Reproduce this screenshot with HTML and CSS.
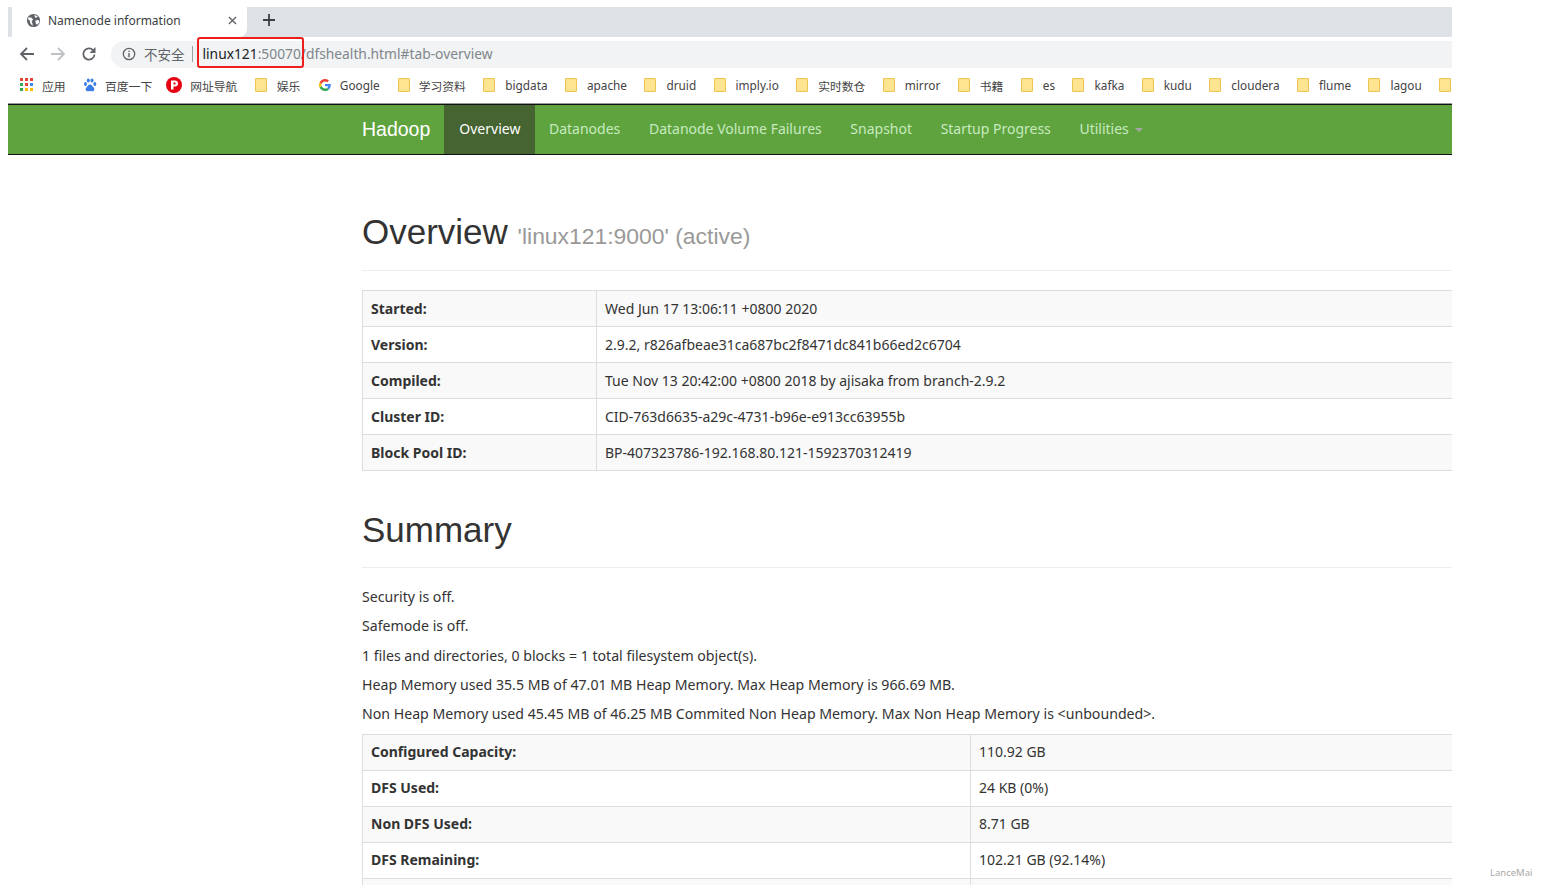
FILE: index.html
```html
<!DOCTYPE html>
<html lang="zh">
<head>
<meta charset="utf-8">
<title>Namenode information</title>
<link rel="stylesheet" href="styles.css">
</head>
<body>
<div class="window">
  <div class="tabstrip">
    <div class="tab">
      <svg class="favicon" viewBox="0 0 16 16"><circle cx="8" cy="8" r="7" fill="#5f6368"/><path d="M3 4.500l3 .5 1.500 2L6 9l1 2.500v2.300L4.500 11 4 8 1.800 6.500zM9 2l3.500 1.500L11 5 9.500 4.500zM10 8l3.500-.5.800 2-2.300 3-1.500-1z" fill="#fff"/></svg>
      <span class="tab-title">Namenode information</span>
      <svg class="tab-close" viewBox="0 0 10 10"><path d="M1 1l8 8M9 1l-8 8" stroke="#5f6368" stroke-width="1.500"/></svg>
    </div>
    <svg class="newtab" viewBox="0 0 12 12"><path d="M6 0v12M0 6h12" stroke="#3c4043" stroke-width="1.800"/></svg>
  </div>
  <div class="toolbar">
    <svg class="nav-icon" viewBox="0 0 16 16"><path d="M15 8H2M8 2L2 8l6 6" fill="none" stroke="#5f6368" stroke-width="1.800"/></svg>
    <svg class="nav-icon" viewBox="0 0 16 16"><path d="M1 8h13M8 2l6 6-6 6" fill="none" stroke="#bdc1c6" stroke-width="1.800"/></svg>
    <svg class="nav-icon" viewBox="0 0 16 16"><path d="M13.500 8.500A5.600 5.600 0 1 1 12 4.200" fill="none" stroke="#5f6368" stroke-width="1.800"/><path d="M14.500 1v6h-6z" fill="#5f6368"/></svg>
    <div class="omnibox">
      <svg class="info" viewBox="0 0 14 14"><circle cx="7" cy="7" r="5.700" fill="none" stroke="#5f6368" stroke-width="1.300"/><path d="M7 6v4.200M7 3.700v1.300" stroke="#5f6368" stroke-width="1.400"/></svg>
      <span class="insecure">不安全</span>
      <span class="sep"></span>
      <span class="url"><span class="host">linux121</span>:50070/dfshealth.html#tab-overview</span>
      <div class="highlight"></div>
    </div>
  </div>
  <div class="bookmarks">
    <a class="bm bm-tight"><svg class="bm-icon" viewBox="0 0 14 14"><g fill="#ea4335"><rect x="0" y="0" width="3" height="3"/><rect x="5" y="0" width="3" height="3"/><rect x="10" y="0" width="3" height="3"/></g><g fill="#34a853"><rect x="0" y="5" width="3" height="3"/><rect x="5" y="5" width="3" height="3" fill="#ea4335"/><rect x="10" y="5" width="3" height="3" fill="#4285f4"/></g><g fill="#fbbc05"><rect x="0" y="10" width="3" height="3" fill="#34a853"/><rect x="5" y="10" width="3" height="3"/><rect x="10" y="10" width="3" height="3"/></g></svg>应用</a>
    <a class="bm bm-tight bm-baidu"><svg class="bm-icon" viewBox="0 0 14 14" fill="#3b7de8"><ellipse cx="2.500" cy="6" rx="1.500" ry="2"/><ellipse cx="5.300" cy="2.500" rx="1.500" ry="2"/><ellipse cx="9" cy="2.500" rx="1.500" ry="2"/><ellipse cx="11.800" cy="6" rx="1.500" ry="2"/><path d="M7 6.500c2 0 2.500 2 4 3.500 1 1.500 0 3.500-2 3.300-1 0-1.300-.4-2-.4s-1 .4-2 .4c-2 .2-3-1.800-2-3.300C4.500 8.500 5 6.500 7 6.500z"/></svg>百度一下</a>
    <a class="bm bm-tight"><svg class="bm-icon bm-icon-lg" viewBox="0 0 16 16"><circle cx="8" cy="8" r="8" fill="#e60012"/><path d="M5 12.500V3.500h4a3 3 0 0 1 0 6H7.500v3z" fill="#fff"/><rect x="7.500" y="5.500" width="2" height="2" fill="#e60012"/></svg>网址导航</a>
    <a class="bm"><span class="folder"></span>娱乐</a>
    <a class="bm bm-tight bm-google"><svg class="bm-icon" viewBox="0 0 14 14"><path d="M12.800 7.100c0-.4 0-.8-.1-1.200H7v2.300h3.300c-.1.800-.6 1.400-1.200 1.800l1.900 1.500c1.100-1 1.800-2.500 1.800-4.400z" fill="#4285f4"/><path d="M7 13c1.600 0 3-.5 4-1.500L9.100 10c-.5.400-1.200.6-2.100.6-1.600 0-2.900-1-3.400-2.500l-2 1.500C2.600 11.700 4.600 13 7 13z" fill="#34a853"/><path d="M3.600 8.100C3.400 7.300 3.400 6.600 3.600 5.900l-2-1.500c-.8 1.600-.8 3.600 0 5.200z" fill="#fbbc05"/><path d="M7 3.400c.9 0 1.700.3 2.300.9L11 2.600C10 1.600 8.600 1 7 1 4.600 1 2.600 2.300 1.600 4.400l2 1.500C4.100 4.400 5.400 3.400 7 3.400z" fill="#ea4335"/></svg>Google</a>
    <a class="bm bm-tight"><span class="folder"></span>学习资料</a>
    <a class="bm"><span class="folder"></span>bigdata</a>
    <a class="bm"><span class="folder"></span>apache</a>
    <a class="bm"><span class="folder"></span>druid</a>
    <a class="bm"><span class="folder"></span>imply.io</a>
    <a class="bm"><span class="folder"></span>实时数仓</a>
    <a class="bm"><span class="folder"></span>mirror</a>
    <a class="bm"><span class="folder"></span>书籍</a>
    <a class="bm"><span class="folder"></span>es</a>
    <a class="bm"><span class="folder"></span>kafka</a>
    <a class="bm"><span class="folder"></span>kudu</a>
    <a class="bm"><span class="folder"></span>cloudera</a>
    <a class="bm"><span class="folder"></span>flume</a>
    <a class="bm"><span class="folder"></span>lagou</a>
    <a class="bm"><span class="folder"></span></a>
  </div>
  <nav class="navbar">
    <span class="brand">Hadoop</span>
    <a class="nav-link active">Overview</a>
    <a class="nav-link">Datanodes</a>
    <a class="nav-link">Datanode Volume Failures</a>
    <a class="nav-link">Snapshot</a>
    <a class="nav-link">Startup Progress</a>
    <a class="nav-link">Utilities<span class="caret"></span></a>
  </nav>
  <main class="container">
    <div class="page-header header-first">
      <h1>Overview <small>'linux121:9000' (active)</small></h1>
    </div>
    <table class="info-table">
      <tr><th>Started:</th><td>Wed Jun 17 13:06:11 +0800 2020</td></tr>
      <tr><th>Version:</th><td>2.9.2, r826afbeae31ca687bc2f8471dc841b66ed2c6704</td></tr>
      <tr><th>Compiled:</th><td>Tue Nov 13 20:42:00 +0800 2018 by ajisaka from branch-2.9.2</td></tr>
      <tr><th>Cluster ID:</th><td>CID-763d6635-a29c-4731-b96e-e913cc63955b</td></tr>
      <tr><th>Block Pool ID:</th><td>BP-407323786-192.168.80.121-1592370312419</td></tr>
    </table>
    <div class="page-header header-second">
      <h1>Summary</h1>
    </div>
    <p class="line">Security is off.</p>
    <p class="line">Safemode is off.</p>
    <p class="line">1 files and directories, 0 blocks = 1 total filesystem object(s).</p>
    <p class="line">Heap Memory used 35.5 MB of 47.01 MB Heap Memory. Max Heap Memory is 966.69 MB.</p>
    <p class="line">Non Heap Memory used 45.45 MB of 46.25 MB Commited Non Heap Memory. Max Non Heap Memory is &lt;unbounded&gt;.</p>
    <table class="info-table summary-table">
      <tr><th>Configured Capacity:</th><td>110.92 GB</td></tr>
      <tr><th>DFS Used:</th><td>24 KB (0%)</td></tr>
      <tr><th>Non DFS Used:</th><td>8.71 GB</td></tr>
      <tr><th>DFS Remaining:</th><td>102.21 GB (92.14%)</td></tr>
      <tr><th>&nbsp;</th><td>&nbsp;</td></tr>
    </table>
  </main>
</div>
<div class="watermark">LanceMai</div>
</body>
</html>
```
FILE: styles.css
```css
* { box-sizing: border-box; }
html, body { height: 100%; }
body {
  margin: 0;
  background: #fff;
  overflow: hidden;
  font-family: "Noto Sans", "Noto Sans CJK SC", sans-serif;
  color: #333;
}
.window {
  width: 1444px;
  height: 885px;
  margin-left: 8px;
  overflow: hidden;
  padding-top: 7px;
}
.tabstrip {
  height: 30px;
  background: #dee1e6;
  display: flex;
  align-items: center;
}
.tab {
  width: 239px;
  height: 30px;
  background: #fff;
  border-left: 4px solid #dee1e6;
  border-radius: 0 0 8px 0;
  display: flex;
  align-items: center;
  padding: 0 0 4px 14px;
}
.favicon { width: 15px; height: 15px; flex: none; }
.tab-title { font-size: 12px; margin-left: 7px; color: #3c4043; white-space: nowrap; flex: 1; }
.tab-close { width: 9px; height: 9px; margin-right: 10px; }
.newtab { width: 12px; height: 12px; margin: 0 0 4px 16px; }
.toolbar {
  height: 31px;
  padding-top: 4px;
  display: flex;
  align-items: center;
  background: #fff;
}
.nav-icon { width: 16px; height: 16px; flex: none; margin: 0 -4px 2px 11px; }
.nav-icon + .nav-icon { margin-left: 19px; }
.omnibox {
  position: relative;
  margin-left: 18px;
  flex: 1;
  height: 27px;
  background: #f1f3f4;
  border-radius: 14px 0 0 14px;
  display: flex;
  align-items: center;
  padding: 0 0 2px 11px;
}
.info { width: 14px; height: 14px; flex: none; }
.insecure { font-size: 13.500px; color: #5f6368; margin-left: 8px; }
.sep { width: 1px; height: 16px; background: #9aa0a6; margin-left: 7px; }
.url {
  font-family: "Noto Sans", sans-serif;
  font-size: 13.800px;
  color: #80868b;
  margin-left: 10px;
  white-space: nowrap;
}
.host { color: #202124; }
.highlight {
  position: absolute;
  left: 86px;
  top: -4px;
  width: 107px;
  height: 31px;
  border: 2px solid #ee1f1a;
  border-radius: 3px;
}
.bookmarks {
  height: 36px;
  display: flex;
  align-items: center;
  overflow: hidden;
  padding: 0 0 1px 12px;
  font-size: 11.800px;
  color: #444;
  background: #fff;
  white-space: nowrap;
  border-bottom: 1px solid #999;
}
.bm { display: flex; align-items: center; gap: 9px; flex: none; margin-right: 17.400px; }
.bm-tight { gap: 8px; }
.bm-baidu { margin-right: 14px; }
.bm-google { margin-right: 18px; }
.bm-icon { width: 14px; height: 14px; flex: none; }
.bm-icon-lg { width: 16px; height: 16px; }
.folder {
  width: 12px;
  height: 14px;
  flex: none;
  background: #ffe591;
  border: 1px solid #efc34f;
  border-radius: 1px;
  margin-right: 1px;
}
.navbar {
  height: 51px;
  background: #5fa33e;
  border-top: 1px solid #111;
  border-bottom: 1px solid #111;
  display: flex;
  align-items: stretch;
  padding-left: 354px;
}
.brand {
  color: #fff;
  font-family: "Liberation Sans", sans-serif;
  font-size: 19.500px;
  line-height: 49px;
  margin-right: 14px;
}
.nav-link {
  color: #c7eac0;
  font-size: 14px;
  line-height: 48px;
  padding: 0 14.300px;
  white-space: nowrap;
}
.nav-link.active { background: #456431; color: #fff; padding-left: 15px; }
.caret {
  display: inline-block;
  margin-left: 6px;
  vertical-align: 2px;
  border-top: 4px solid #a5a5a5;
  border-left: 4px solid transparent;
  border-right: 4px solid transparent;
}
.container { padding-left: 354px; width: 1444px; }
.page-header { border-bottom: 1px solid #eee; padding-bottom: 14px; margin: 57px 0 19px; }
.header-second { padding-bottom: 17px; margin: 39px 0 14px; }
h1 {
  margin: 0;
  font-family: "Liberation Sans", sans-serif;
  font-size: 35px;
  font-weight: 400;
  line-height: 40px;
  color: #333;
}
small { font-size: 22.900px; color: #999; }
.info-table {
  width: 100%;
  border-collapse: collapse;
  font-size: 14px;
  table-layout: fixed;
  border-left: 1px solid #ddd;
  border-top: 1px solid #ddd;
}
.info-table th, .info-table td {
  height: 36px;
  padding: 0 8px;
  border: 1px solid #ddd;
  border-right: 0;
  text-align: left;
  white-space: nowrap;
}
.info-table th { width: 234px; font-weight: 700; }
.info-table tr:nth-child(odd) { background: #f9f9f9; }
.line { margin: 0; font-size: 14.150px; line-height: 29.300px; white-space: nowrap; }
.summary-table { margin-top: 6px; }
.summary-table th { width: 608px; }
.summary-table th, .summary-table td { padding-bottom: 2px; }
.watermark {
  position: absolute;
  left: 1490px;
  top: 866px;
  font-size: 9.500px;
  color: #a9a9a9;
}
```
